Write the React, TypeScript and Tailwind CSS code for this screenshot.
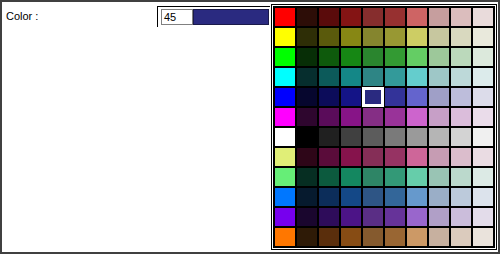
const palette: string[][] = [
  ["#ff0000", "#2d0d07", "#5a0b0b", "#841414", "#862d2d", "#973030", "#ce6464", "#c69e9e", "#dbbdbd", "#e9dbdb"],
  ["#ffff00", "#2e2e06", "#5a5a0c", "#878714", "#85852e", "#989833", "#cdcd64", "#c7c79f", "#d9d9bf", "#e9e9dc"],
  ["#00ff00", "#072e06", "#0e5a0c", "#168714", "#2a852e", "#339a33", "#64cd64", "#9dc89a", "#bbd9bb", "#dce9dc"],
  ["#00ffff", "#062e2e", "#0c5a5a", "#148787", "#2e8585", "#339a9a", "#64cdcd", "#9ec7c7", "#bdd9d9", "#dcebeb"],
  ["#0000ff", "#06062e", "#0c0c5a", "#141487", "#2a2a80", "#333399", "#6464cd", "#9f9fc7", "#bdbddb", "#dcdcea"],
  ["#ff00ff", "#2e062e", "#5a0c5a", "#871487", "#852e85", "#993399", "#cd64cd", "#c79fc7", "#dbbddb", "#eadcea"],
  ["#ffffff", "#000000", "#202020", "#404040", "#5c5c5c", "#7a7a7a", "#9a9a9a", "#b5b5b5", "#d3d3d3", "#f0f0f0"],
  ["#e0ee77", "#2e0618", "#5a0c3a", "#86134c", "#852e57", "#963363", "#ce6699", "#c69cb3", "#dbbdcc", "#eadce3"],
  ["#66ee77", "#062e22", "#0c5a3e", "#148760", "#2e8566", "#339977", "#66cdaa", "#99c4b4", "#bbd9cc", "#dceae5"],
  ["#0077ff", "#061a2e", "#0c2d5a", "#144887", "#2e5585", "#336699", "#6699cc", "#9aaec7", "#bccadb", "#dce3ec"],
  ["#7700ee", "#1a062e", "#2e0c5a", "#4c1487", "#5a2e85", "#663399", "#9966cc", "#b09fc7", "#cbbddb", "#e3dcea"],
  ["#ff7700", "#2e1a06", "#5a2e0c", "#874c14", "#855a2e", "#996633", "#cc9966", "#c7b09f", "#dbcbbd", "#eae3dc"],
];

const SELECTED_ROW = 4;
const SELECTED_COL = 4;

function Swatch({ color, selected }: { color: string; selected: boolean }) {
  return (
    <div
      className={
        selected
          ? "w-[20px] h-[18px] border-2 border-white shadow-[0_0_0_1px_#ffffff]"
          : "w-[20px] h-[18px]"
      }
      style={{ backgroundColor: color }}
    />
  );
}

export default function App() {
  const current = palette[SELECTED_ROW][SELECTED_COL];

  return (
    <div
      className="w-[500px] h-[254px] bg-white border-2 border-[#404040] flex text-[11px] text-black"
      style={{ fontFamily: '"Liberation Sans", Arial, sans-serif' }}
    >
      {/* Label */}
      <div className="w-[155px] pl-[4px] pt-[7px] leading-[14px]">Color :</div>

      {/* Value + preview */}
      <div className="w-[113px] h-[21px] mt-[4px] border-t border-l border-black pl-[3px] pt-[2px] flex">
        <div className="w-[32px] h-[16px] border border-[#808080] bg-white pl-[2px] leading-[14px]">45</div>
        <div className="w-[76px] h-[16px] border border-[#1a1a4a]" style={{ backgroundColor: current }} />
      </div>

      {/* Palette */}
      <div className="mt-[2px] ml-px border border-black bg-white p-px self-start">
        <div className="grid grid-cols-[repeat(10,20px)] gap-[2px] bg-black p-[2px]">
          {palette.map((row, r) =>
            row.map((c, i) => (
              <Swatch key={`${r}-${i}`} color={c} selected={r === SELECTED_ROW && i === SELECTED_COL} />
            ))
          )}
        </div>
      </div>
    </div>
  );
}
